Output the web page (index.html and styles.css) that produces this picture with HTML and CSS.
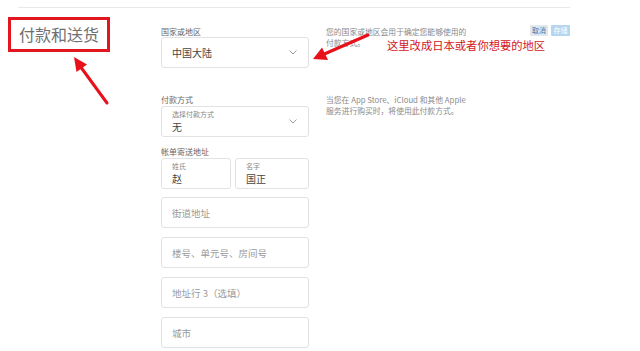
FILE: index.html
```html
<!DOCTYPE html>
<html lang="zh-CN">
<head>
    <meta charset="UTF-8">
    <meta name="viewport" content="width=device-width, initial-scale=1.0">
    <title>付款和送货</title>
    <link rel="stylesheet" href="styles.css">
</head>
<body>
    <div class="page">
      <div class="rule"></div>

      <section class="section section-country">
        <div class="heading-col">
          <h2 class="heading">付款和送货</h2>
        </div>
        <div class="form-col">
          <div class="field-label">国家或地区</div>
          <div class="field select">
            <span class="value">中国大陆</span>
            <svg class="chevron" width="8" height="5" viewBox="0 0 8 5"><polyline points="0.5,0.5 4,4 7.5,0.5" fill="none" stroke="#9a9a9a" stroke-width="1"/></svg>
          </div>
        </div>
        <p class="desc">您的国家或地区会用于确定您能够使用的<br>付款方式。</p>
        <div class="actions">
          <button class="btn btn-cancel">取消</button>
          <button class="btn btn-save">存储</button>
        </div>
      </section>

      <section class="section section-payment">
        <div class="heading-col"></div>
        <div class="form-col">
          <div class="field-label">付款方式</div>
          <div class="field select stacked">
            <div>
              <div class="inner-label">选择付款方式</div>
              <div class="value">无</div>
            </div>
            <svg class="chevron" width="8" height="5" viewBox="0 0 8 5"><polyline points="0.5,0.5 4,4 7.5,0.5" fill="none" stroke="#9a9a9a" stroke-width="1"/></svg>
          </div>

          <div class="field-label billing-label">帐单寄送地址</div>
          <div class="name-row">
            <div class="field stacked">
              <div>
                <div class="inner-label">姓氏</div>
                <div class="value">赵</div>
              </div>
            </div>
            <div class="field stacked">
              <div>
                <div class="inner-label">名字</div>
                <div class="value">国正</div>
              </div>
            </div>
          </div>
          <div class="field address"><span class="placeholder">街道地址</span></div>
          <div class="field address"><span class="placeholder">楼号、单元号、房间号</span></div>
          <div class="field address"><span class="placeholder">地址行 3（选填）</span></div>
          <div class="field address"><span class="placeholder">城市</span></div>
        </div>
        <p class="desc">当您在 App Store、iCloud 和其他 Apple<br>服务进行购买时，将使用此付款方式。</p>
      </section>

      <!-- annotation layer -->
      <div class="note">这里改成日本或者你想要的地区</div>
      <svg class="arrows" width="640" height="351" viewBox="0 0 640 351">
        <line x1="107" y1="103" x2="80" y2="66" stroke="#e8101a" stroke-width="3" stroke-linecap="round"/>
        <polygon points="74,57 87,64.5 76.5,72" fill="#e8101a"/>
        <line x1="368" y1="35" x2="322" y2="55" stroke="#e8101a" stroke-width="3" stroke-linecap="round"/>
        <polygon points="313,59 322,47.5 328,60" fill="#e8101a"/>
      </svg>
    </div>
</body>
</html>
```

FILE: styles.css
```css
body {
  margin: 0;
  background-color: #fff;
  font-family: "Liberation Sans", "Noto Sans CJK SC", sans-serif;
  color: #666;
}

.page {
  position: relative;
  width: 640px;
  height: 351px;
  overflow: hidden;
}

.rule {
  height: 1px;
  margin: 7px 0 0 18px;
  width: 552px;
  background-color: #e8e8e8;
}

.section {
  display: grid;
  grid-template-columns: 153px 148px 204px 60px;
  padding-left: 8px;
}

.section-country {
  margin-top: 9px;
}

.section-payment {
  margin-top: 26px;
}

.heading {
  box-sizing: border-box;
  width: 102px;
  height: 35px;
  margin: 0;
  padding: 0 0 0 8px;
  border: 3px solid #e2161e;
  font-family: "Noto Sans CJK SC", sans-serif;
  font-size: 16px;
  font-weight: normal;
  line-height: 29px;
  color: #707070;
}

.field-label {
  font-family: "Noto Sans CJK SC", sans-serif;
  font-size: 8px;
  line-height: 11px;
  color: #666;
  margin-bottom: 1px;
}

.section-country .field-label {
  margin-top: 9px;
  margin-bottom: 0;
}

.billing-label {
  margin-top: 9px;
}

.field {
  box-sizing: border-box;
  display: flex;
  align-items: center;
  height: 31px;
  padding: 0 10px;
  border: 1px solid #e2e2e2;
  border-radius: 3px;
  background-color: #fff;
  font-family: "Noto Sans CJK SC", sans-serif;
}

.select {
  justify-content: space-between;
}

.chevron {
  margin-right: 1px;
}

.value {
  font-size: 10px;
  line-height: 12px;
  color: #444;
}

.inner-label {
  font-size: 7px;
  line-height: 9px;
  margin-bottom: 2px;
  color: #888;
}

.name-row {
  display: grid;
  grid-template-columns: 70px 74px;
  column-gap: 4px;
}

.address {
  margin-top: 9px;
}

.name-row + .address {
  margin-top: 8px;
}

.placeholder {
  font-size: 9.5px;
  color: #9a9a9a;
}

.desc {
  margin: 9px 0 0 17px;
  font-family: "Noto Sans CJK SC", sans-serif;
  font-size: 7.8px;
  line-height: 11px;
  color: #8a8a8a;
}

.section-payment .desc {
  margin-top: 0;
}

.actions {
  display: flex;
  gap: 3px;
  margin-top: 8px;
  margin-left: 17px;
  align-items: flex-start;
}

.btn {
  height: 11px;
  padding: 0;
  border: none;
  border-radius: 1px;
  font-family: "Noto Sans CJK SC", sans-serif;
  font-size: 7px;
  line-height: 11px;
  white-space: nowrap;
  cursor: pointer;
}

.btn-cancel {
  width: 18px;
  background-color: #dfe7ef;
  color: #4d77a6;
}

.btn-save {
  width: 19px;
  background-color: #b6d5ee;
  color: #fff;
}

.note {
  position: absolute;
  left: 387px;
  top: 38px;
  font-family: "Noto Sans CJK SC", sans-serif;
  font-size: 11.3px;
  line-height: 14px;
  color: #d4151d;
  white-space: nowrap;
}

.arrows {
  position: absolute;
  left: 0;
  top: 0;
  pointer-events: none;
}
```
